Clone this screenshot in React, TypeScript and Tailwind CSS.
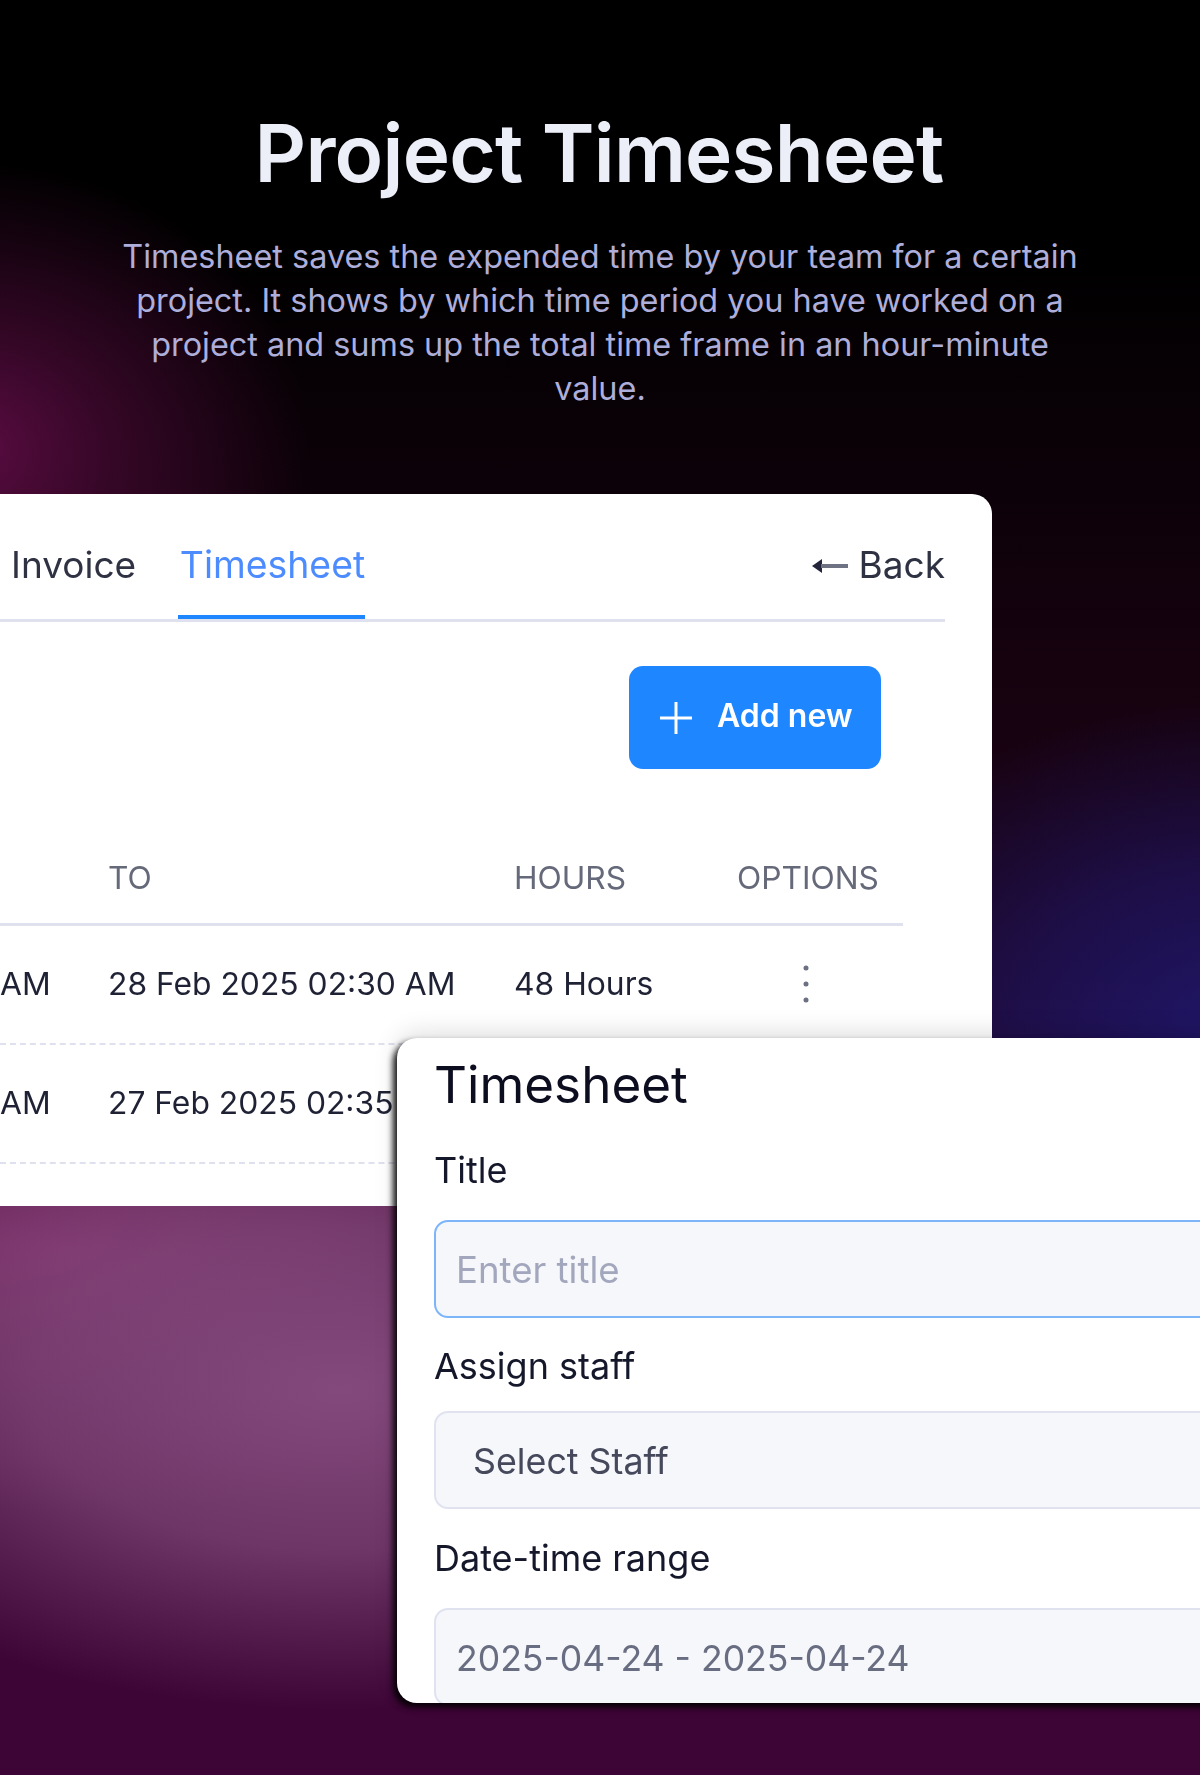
export default function App() {
  return (
    <div className="relative h-[1775px] w-[1200px] overflow-hidden font-['Inter',sans-serif] bg-[#000000]">
      <div className="absolute inset-0 bg-[radial-gradient(ellipse_340px_290px_at_-30px_450px,#5a0c42_0%,rgba(90,12,66,0.55)_40%,rgba(90,12,66,0)_100%),radial-gradient(ellipse_460px_340px_at_1240px_1040px,#1f1668_0%,rgba(31,22,104,0.6)_50%,rgba(31,22,104,0)_100%),radial-gradient(ellipse_620px_320px_at_340px_1390px,#83497c_0%,rgba(131,73,124,0.7)_50%,rgba(131,73,124,0)_100%),radial-gradient(ellipse_700px_260px_at_60px_1250px,#7e2f69_0%,rgba(126,47,105,0)_100%),linear-gradient(to_bottom,#000000_14%,#16020f_38%,#1c0318_55%,#3c0535_85%,#3c0535_100%)]" />
      <div className="relative flex flex-col items-center">
        <h1 className="mt-[108px] -ml-[2px] text-[80px] leading-[90px] font-semibold text-[#eceef8] tracking-[-0.01em]">Project Timesheet</h1>
        <p className="mt-[37px] w-[980px] text-center text-[32.4px] leading-[44px] text-[#aeaedb]">
          Timesheet saves the expended time by your team for a certain project. It shows by which time period you have worked on a project and sums up the total time frame in an hour-minute value.
        </p>
      </div>

      <div className="relative mt-[83px] h-[712px] w-[992px] rounded-r-[20px] bg-white">
        <div className="blur-[0.35px]">
          <div className="flex h-[128px] w-[945px] items-stretch border-b-[3px] border-[#dfe1ee] leading-[44px]">
            <div className="ml-[11px] pt-[49px] text-[37px] text-[#2f3242]">Invoice</div>
            <div className="ml-[42px] flex w-[187px] justify-end border-b-[4px] border-[#1e86ff] pt-[49px] text-[37.4px] text-[#4c8cff]">Timesheet</div>
            <div className="ml-auto flex items-start gap-[11px] pt-[49px] text-[37px] text-[#2f3242]">
              <svg className="mt-[13px]" width="36" height="20" viewBox="0 0 36 20"><path d="M0 10 L10 3 V17 Z" fill="#23263a" /><rect x="9" y="8" width="27" height="4" fill="#6f7282" /></svg>
              Back
            </div>
          </div>

          <div className="ml-[629px] mt-[44px] flex h-[103px] w-[252px] items-center rounded-[14px] bg-[#1e86ff] pl-[30px] text-[32px] font-semibold text-white">
            <svg width="34" height="34" viewBox="0 0 34 34"><path d="M17 1 V33 M1 17 H33" stroke="#ffffff" strokeWidth="3" /></svg>
            <span className="-mt-[4px] ml-[24px]">Add new</span>
          </div>

          <div className="mt-[89px] flex h-[68px] w-[903px] border-b-[3px] border-[#dfe1ee] text-[31.7px] leading-[40px] text-[#656979]">
            <div className="ml-[108px] w-[406px]">TO</div>
            <div className="w-[223px]">HOURS</div>
            <div>OPTIONS</div>
          </div>
          <div className="flex h-[119px] items-center border-b-[2px] border-dashed border-[#dfe1ee] pb-[2px] text-[31.8px] leading-[40px] text-[#1f2234]">
            <div className="w-[108px]">AM</div>
            <div className="w-[406px]">28 Feb 2025 02:30 AM</div>
            <div className="w-[223px]">48 Hours</div>
            <svg className="ml-[65px]" width="8" height="40" viewBox="0 0 8 40"><circle cx="4" cy="4" r="2.5" fill="#6c7080" /><circle cx="4" cy="20" r="2.5" fill="#6c7080" /><circle cx="4" cy="36" r="2.5" fill="#6c7080" /></svg>
          </div>
          <div className="flex h-[119px] items-center border-b-[2px] border-dashed border-[#dfe1ee] pb-[2px] text-[31.8px] leading-[40px] text-[#1f2234]">
            <div className="w-[108px]">AM</div>
            <div className="w-[406px]">27 Feb 2025 02:35 AM</div>
          </div>
        </div>
      </div>

      <div className="absolute left-[397px] top-[1038px] h-[665px] w-[900px] overflow-hidden rounded-[20px] bg-white pl-[37px] shadow-[-4px_4px_6px_rgba(0,0,0,0.9),0_-6px_24px_rgba(0,0,0,0.12)]">
        <div className="blur-[0.35px]">
          <div className="pt-[16px] text-[51.2px] leading-[60px] text-[#0c0e20]">Timesheet</div>
          <label className="mt-[35px] block text-[36px] leading-[42px] text-[#15172b]">Title</label>
          <div className="mt-[29px] flex h-[98px] items-center rounded-[14px] border-[2px] border-[#7db5fb] bg-[#f6f7fa] pl-[20px] pt-[3px] text-[36.6px] text-[#a3a7bd]">Enter title</div>
          <label className="mt-[27px] block text-[36px] leading-[42px] text-[#15172b]">Assign staff</label>
          <div className="mt-[24px] flex h-[98px] items-center rounded-[14px] border-[2px] border-[#e0e3ef] bg-[#f6f7fa] pl-[37px] pt-[3px] text-[35.8px] text-[#46495c]">Select Staff</div>
          <label className="mt-[28px] block text-[36px] leading-[42px] text-[#15172b]">Date-time range</label>
          <div className="mt-[29px] flex h-[98px] items-center rounded-[14px] border-[2px] border-[#e0e3ef] bg-[#f6f7fa] pl-[20px] pt-[3px] text-[35.6px] text-[#696d81]">2025-04-24 - 2025-04-24</div>
        </div>
      </div>
    </div>
  );
}
